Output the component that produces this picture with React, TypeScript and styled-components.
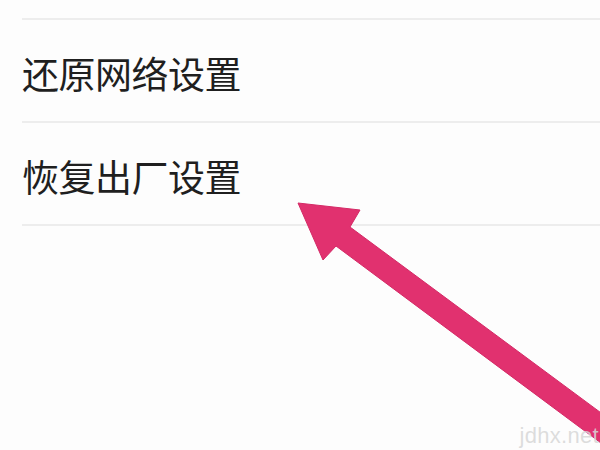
import React from "react";
import styled, { createGlobalStyle } from "styled-components";

const GlobalStyle = createGlobalStyle`
  html, body {
    margin: 0;
    padding: 0;
    background: #fdfdfd;
  }
`;

const items = ["还原网络设置", "恢复出厂设置"];

export default function App() {
  return (
    <>
      <GlobalStyle />
      <Screen>
        <SettingsList>
          {items.map((label) => (
            <SettingsRow key={label}>
              <RowLabel>{label}</RowLabel>
            </SettingsRow>
          ))}
        </SettingsList>

        <Arrow viewBox="0 0 600 450" width="600" height="450">
          <polygon
            points="298,203 360,210 350,227 666,461 652,481 336,246 323,260"
            fill="#e1316f"
            stroke="#d42a66"
            strokeWidth="1"
            strokeLinejoin="round"
          />
        </Arrow>

        <Watermark>jdhx.net</Watermark>
      </Screen>
    </>
  );
}

const Screen = styled.div`
  position: relative;
  width: 600px;
  height: 450px;
  overflow: hidden;
  background: #fdfdfd;
  font-family: "Noto Sans CJK SC", "Noto Sans", sans-serif;
`;

const SettingsList = styled.ul`
  list-style: none;
  margin: 0;
  padding: 18px 0 0 22px;
`;

const SettingsRow = styled.li`
  display: flex;
  align-items: center;
  height: 95px;
  padding-top: 6px;
  border-top: 2px solid #ededed;

  &:last-child {
    border-bottom: 2px solid #ededed;
  }
`;

const RowLabel = styled.span`
  font-size: 37px;
  line-height: 1;
  color: #1f1f1f;
  letter-spacing: -0.5px;
`;

const Arrow = styled.svg`
  position: absolute;
  left: 0;
  top: 0;
  pointer-events: none;
`;

const Watermark = styled.span`
  position: absolute;
  right: 1px;
  bottom: 1px;
  font-family: "Liberation Sans", Arial, sans-serif;
  font-size: 22px;
  color: rgba(215, 215, 215, 0.85);
  letter-spacing: 0.3px;
`;
